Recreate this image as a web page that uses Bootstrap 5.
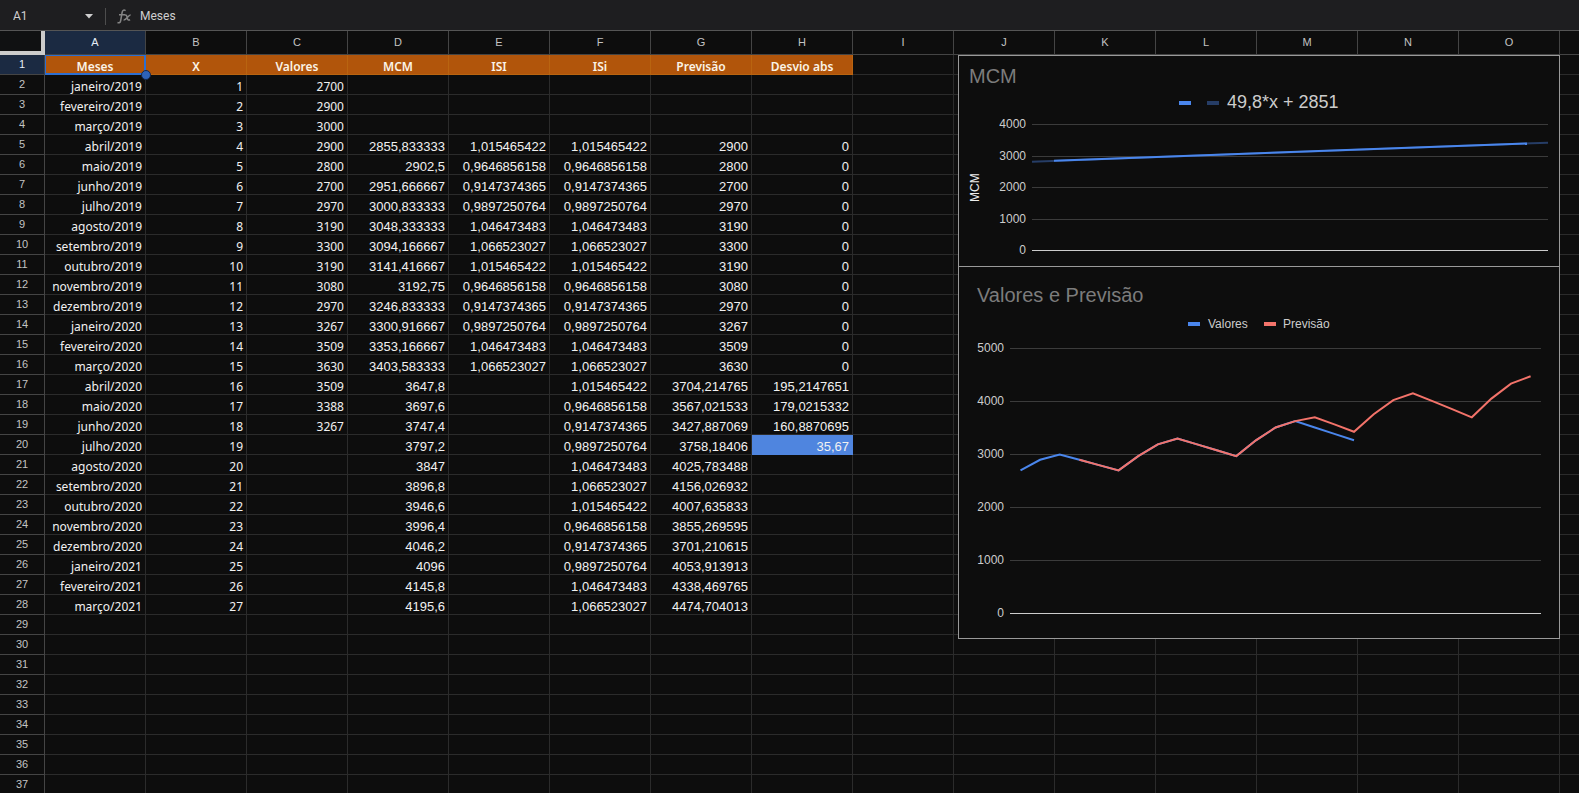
<!DOCTYPE html>
<html lang="pt-BR" data-bs-theme="dark">
<head>
<meta charset="utf-8">
<meta name="viewport" content="width=device-width, initial-scale=1">
<title>Previsão – Meses</title>
<link rel="stylesheet" href="https://cdn.jsdelivr.net/npm/bootstrap@5.3.0/dist/css/bootstrap.min.css">
<style>
  :root {
    --ink: #0d0d0d;
    --line: #2b2b2b;
    --line-head: #444;
    --orange: #b1550b;
  }
  body { background: var(--ink); color: #eee; font-family: "Liberation Sans", Arial, sans-serif; }

  /* formula bar */
  .formula-bar { height: 31px; padding-top: 2px; background: #1e1e20; border-bottom: 1px solid #555; }
  .formula-bar input { background: transparent; border: 0; outline: 0; padding: 0; color: #cfcfcf; font-family: Roboto, sans-serif; font-size: 12px; }
  .name-box { width: 71px; margin-left: 13px; }
  .caret-btn { width: 12px; height: 20px; line-height: 1; }
  .bar-rule { width: 1px; height: 17px; background: #4d4d4d; margin-left: 9px; }
  .fx-icon { margin-left: 11px; }
  .content-box { margin-left: 8px; }

  /* grid */
  .grid-table { table-layout: fixed; border-collapse: separate; border-spacing: 0; width: 1661px; }
  .grid-table th, .grid-table td { height: 20px; padding: 0 3px; border: 0 solid var(--line); border-width: 0 1px 1px 0; white-space: nowrap; overflow: hidden; }
  .grid-table td { vertical-align: bottom; text-align: right; font-size: 13px; line-height: 15px; color: #f1f1f1; }
  .grid-table .calc { font-family: "Noto Sans", sans-serif; font-size: 12px; line-height: 14px; }
  .grid-table thead th { height: 24px; padding-bottom: 2px; border-color: var(--line-head); font-size: 11px; line-height: 12px; font-weight: 400; text-align: center; color: #c3c3c3; }
  .grid-table tbody th { border-color: var(--line-head); font-size: 11px; line-height: 18px; font-weight: 400; text-align: center; vertical-align: top; color: #c3c3c3; }
  .grid-table .picked { background: #1b2a42; color: #e6edf7; }
  .grid-table .corner { border-right: 4px solid #ccc; border-bottom: 4px solid #ccc; background: #101112; }
  .grid-table .title-cell { background: var(--orange); border-color: #b96410; color: #fbf3e6; font-weight: 600; text-align: center; }
  .grid-table .active-cell { box-shadow: inset 0 0 0 1px #2c6fd2; border-color: #2c6fd2; }
  .grid-table .marked { background: #4f85df; border-color: #4f85df; }
  .fill-handle { width: 10px; height: 10px; background: #2d62b8; border: 1px solid #14284d; left: 141px; top: 39px; }

  /* floating charts */
  .charts { left: 958px; top: 24px; width: 602px; }
  .chart-box { border: 1px solid #999; background: var(--ink); }
  .chart-box + .chart-box { border-top: 0; }
  .chart-box svg { width: 100%; height: auto; }
  .chart-box text { font-size: 12px; fill: #ccc; }
  .chart-box .heading { font-size: 20px; fill: #7c7c7c; }
  .chart-box .equation { font-size: 18px; }
  .chart-box .axis-name { fill: #eee; }
  .tick { text-anchor: end; }
  .rule { stroke: #3b3b3b; }
  .rule-zero { stroke: #ccc; }
  .serie { fill: none; stroke-width: 2; }
</style>
</head>
<body class="vh-100 overflow-hidden d-flex flex-column">

<header class="formula-bar d-flex align-items-center flex-shrink-0">
  <input class="name-box" type="text" value="A1" aria-label="Caixa de nome">
  <button class="caret-btn btn p-0 border-0 d-flex align-items-center" type="button" aria-label="Intervalos">
    <svg width="10" height="5" viewBox="0 0 10 5"><path d="M1 0h8L5 4.500z" fill="#cfcfcf"/></svg>
  </button>
  <span class="bar-rule"></span>
  <svg class="fx-icon" width="15" height="15" viewBox="0 0 15 15" fill="none" stroke="#858585" stroke-width="1.500" aria-hidden="true">
    <path d="M8.600 1.600C6.600.500 5.500 1.300 5.100 3.500L3.700 11.500C3.300 13.700 2.200 14.200.500 13.500M2 5.700h6M7.600 6.200c1.600-.8 2.100.2 2.500 2.200s1 3.300 3 2.400M13.600 6C11.300 5.700 9.500 11.400 6.600 11"/>
  </svg>
  <input class="content-box flex-grow-1" type="text" value="Meses" aria-label="Conteúdo da célula">
</header>

<main class="position-relative flex-grow-1 overflow-hidden">
  <table class="grid-table">
    <colgroup id="cols"></colgroup>
    <thead><tr id="letters"></tr></thead>
    <tbody id="rows"></tbody>
  </table>
  <span class="fill-handle position-absolute rounded-circle"></span>

  <div class="charts position-absolute">
    <div class="chart-box">
      <svg class="d-block" viewBox="959 56 600 210" role="img" aria-label="MCM">
        <text class="heading" x="969" y="83">MCM</text>
        <rect x="1179" y="101" width="12" height="4" fill="#4a86ec"/>
        <rect x="1207" y="101" width="12" height="4" fill="#263d66"/>
        <text class="equation" x="1227" y="108">49,8*x + 2851</text>
        <g id="axis1"></g>
        <text class="axis-name" transform="translate(979 202) rotate(-90)">MCM</text>
        <path class="serie" stroke="#263d66" d="M1032 161.700L1548 142.700"/>
        <path class="serie" stroke="#4a86ec" d="M1054 160.700L1527 143.500"/>
      </svg>
    </div>
    <div class="chart-box">
      <svg class="d-block" viewBox="959 267 600 371" role="img" aria-label="Valores e Previsão">
        <text class="heading" x="977" y="302">Valores e Previsão</text>
        <rect x="1188" y="322" width="12" height="4" fill="#4a86ec"/>
        <text x="1208" y="328">Valores</text>
        <rect x="1264" y="322" width="12" height="4" fill="#f3736a"/>
        <text x="1283" y="328">Previsão</text>
        <g id="axis2"></g>
        <polyline id="line-valores" class="serie" stroke="#4a86ec"/>
        <polyline id="line-previsao" class="serie" stroke="#f3736a"/>
      </svg>
    </div>
  </div>
</main>

<script src="https://cdn.jsdelivr.net/npm/bootstrap@5.3.0/dist/js/bootstrap.bundle.min.js"></script>
<script>
  const titles = ['Meses', 'X', 'Valores', 'MCM', 'ISI', 'ISi', 'Previsão', 'Desvio abs'];
  const months = ['janeiro', 'fevereiro', 'março', 'abril', 'maio', 'junho', 'julho', 'agosto', 'setembro', 'outubro', 'novembro', 'dezembro'];
  const valores = [2700, 2900, 3000, 2900, 2800, 2700, 2970, 3190, 3300, 3190, 3080, 2970, 3267, 3509, 3630, 3509, 3388, 3267];
  const mcm = ['', '', '', '2855,833333', '2902,5', '2951,666667', '3000,833333', '3048,333333', '3094,166667', '3141,416667', '3192,75', '3246,833333', '3300,916667', '3353,166667', '3403,583333',
    '3647,8', '3697,6', '3747,4', '3797,2', '3847', '3896,8', '3946,6', '3996,4', '4046,2', '4096', '4145,8', '4195,6'];
  const seasonal = ['1,015465422', '0,9646856158', '0,9147374365', '0,9897250764', '1,046473483', '1,066523027'];
  const forecast = ['3704,214765', '3567,021533', '3427,887069', '3758,18406', '4025,783488', '4156,026932', '4007,635833', '3855,269595', '3701,210615', '4053,913913', '4338,469765', '4474,704013'];
  const deviation = ['195,2147651', '179,0215332', '160,8870695', '35,67'];

  const previsao = i => i < 3 ? '' : i < 15 ? String(valores[i]) : forecast[i - 15];
  const record = i => [
    months[i % 12] + '/' + (2019 + Math.floor(i / 12)),
    i + 1,
    valores[i] ?? '',
    mcm[i],
    i >= 3 && i < 15 ? seasonal[(i - 3) % 6] : '',
    i >= 3 ? seasonal[(i - 3) % 6] : '',
    previsao(i),
    i < 3 ? '' : i < 15 ? '0' : deviation[i - 15] ?? ''
  ];

  // fifteen lettered columns, then an unlabelled one that fills the right edge
  const letters = [...'ABCDEFGHIJKLMNO', ''];
  document.getElementById('cols').innerHTML = '<col style="width:45px">' + letters.map(() => '<col style="width:101px">').join('');
  document.getElementById('letters').innerHTML = '<th class="corner"></th>' +
    letters.map(l => `<th scope="col"${l === 'A' ? ' class="picked"' : ''}>${l}</th>`).join('');

  let html = '';
  for (let r = 1; r <= 37; r++) {
    const data = r === 1 ? titles : r <= 28 ? record(r - 2) : [];
    html += `<tr><th scope="row"${r === 1 ? ' class="picked"' : ''}>${r}</th>`;
    letters.forEach((l, c) => {
      const cls = [];
      if (c < 3 || r === 1) cls.push('calc');
      if (r === 1 && c < 8) cls.push('title-cell');
      if (r === 1 && c === 0) cls.push('active-cell');
      if (r === 20 && c === 7) cls.push('marked');
      html += `<td class="${cls.join(' ')}">${data[c] ?? ''}</td>`;
    });
    html += '</tr>';
  }
  document.getElementById('rows').innerHTML = html;

  function axis(id, max, top, bottom, x1, x2) {
    let out = '';
    for (let v = 0; v <= max; v += 1000) {
      const y = Math.round(bottom - (bottom - top) * v / max);
      out += `<text class="tick" x="${x1 - 6}" y="${y + 4}">${v}</text>` +
        `<path class="${v ? 'rule' : 'rule-zero'}" d="M${x1} ${y + .5}H${x2}"/>`;
    }
    document.getElementById(id).innerHTML = out;
  }
  axis('axis1', 4000, 124, 250, 1032, 1548);
  axis('axis2', 5000, 348, 613, 1010, 1541);

  const point = (v, i) => `${(1020.5 + i * 19.62).toFixed(1)},${(613.5 - v * .053).toFixed(1)}`;
  document.getElementById('line-valores').setAttribute('points', valores.map(point).join(' '));
  document.getElementById('line-previsao').setAttribute('points',
    [...Array(27).keys()].slice(3).map(i => point(parseFloat(previsao(i).replace(',', '.')), i)).join(' '));
</script>
</body>
</html>
